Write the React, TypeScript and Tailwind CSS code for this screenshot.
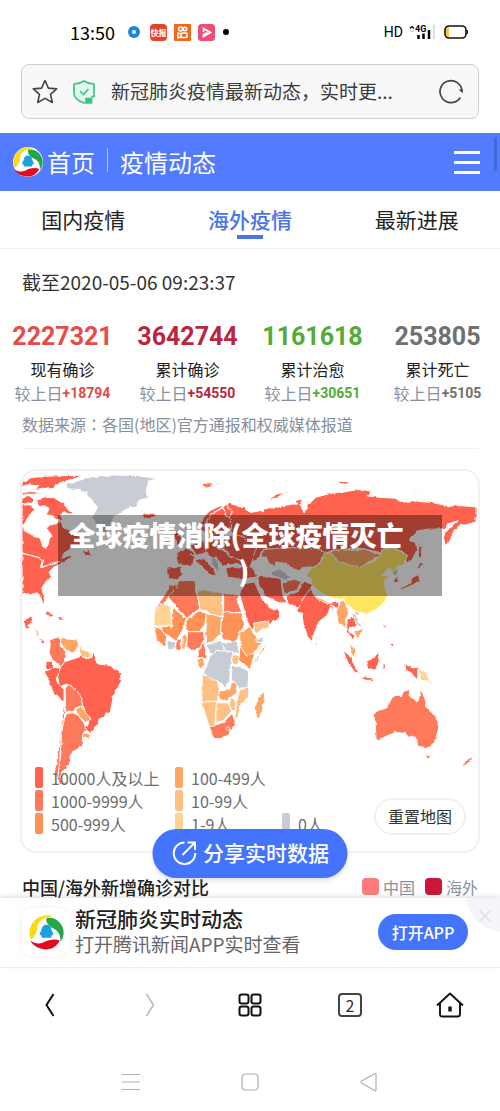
import React from 'react';

const RED = '#ff6350';
const CORAL = '#ff7a5a';
const ORANGE = '#ff9156';
const AMBER = '#ffa665';
const SAND = '#ffc183';
const CREAM = '#ffd394';
const GREY = '#c8ccd5';
const YELLOW = '#ffe662';

interface Region {
  fill: string;
  points: string[];
}

const regions: Region[] = [
  {
    fill: RED,
    points: [
      // russia
      '640,135 662,128 690,138 705,137 720,156 750,150 760,156 765,140 800,142 820,135 850,130 865,130 860,120 876,115 876,135 885,157 895,145 892,125 905,124 920,110 960,98 1010,92 1050,86 1090,95 1075,105 1120,110 1160,112 1180,125 1210,120 1270,125 1320,135 1360,135 1404,138 1404,184 1380,190 1355,195 1340,206 1335,215 1325,240 1312,255 1305,235 1310,215 1335,195 1350,180 1320,190 1305,205 1260,205 1230,210 1200,240 1220,245 1225,270 1210,300 1190,310 1195,285 1160,262 1130,265 1110,275 1060,264 1020,265 970,270 945,280 920,265 870,262 820,262 760,268 750,290 720,310 700,300 680,270 670,235 665,200',
      // north america
      '33,125 60,135 70,150 55,165 45,180 35,195 40,210 62,222 85,230 93,250 104,264 113,250 115,235 124,225 112,210 108,195 130,190 150,182 160,200 180,215 200,222 215,240 205,255 180,265 160,278 150,295 175,285 185,295 160,303 150,312 130,320 115,335 122,350 100,372 92,385 97,400 102,425 98,434 90,415 85,402 60,400 45,402 33,404',
      '33,66 60,50 100,46 150,44 215,43 190,55 165,60 135,70 130,82 110,84 95,82 75,86 80,75 50,72 33,78',
      '33,95 60,92 105,96 70,100 33,100',
      '33,112 60,105 72,118 62,128 33,125',
      '75,120 100,108 130,110 148,122 160,125 168,142 190,158 172,160 160,152 150,165 160,180 140,176 125,165 105,162 115,145 100,135 85,138',
      '215,272 235,268 243,284 225,286',
      '395,160 430,157 440,165 415,174 400,170',
      // europe
      '570,190 585,165 600,150 625,138 650,132 668,150 660,170 666,200 640,225 620,235 600,240 600,225 585,215 570,205',
      '540,255 580,240 620,235 660,225 690,225 720,240 740,260 720,330 690,310 655,310 640,320 620,290 600,290 590,275 560,285',
      '500,275 530,262 555,280 550,310 530,318 505,310',
      '470,320 512,318 515,345 500,358 472,355',
      '552,300 580,292 610,325 620,345 605,345 575,315',
      '490,215 505,215 525,255 505,258 495,235',
      '648,325 700,318 732,325 742,350 700,358 655,350',
      // middle east and south asia
      '745,348 780,350 815,355 820,400 830,430 800,422 770,410 748,375',
      '690,402 705,370 735,365 750,400 765,425 790,450 805,446 813,452 805,480 775,492 735,498 728,515 712,480',
      '830,408 865,395 885,365 910,372 905,395 880,420 870,442 835,430',
      '880,418 903,385 920,412 960,430 990,425 990,445 965,440 955,465 930,485 915,520 908,548 895,530 882,490 878,460 860,455 870,440',
      '1015,478 1035,470 1048,490 1040,502 1022,500 1020,515 1038,530 1030,540 1012,515',
      // far east
      '1158,350 1168,350 1170,365 1160,368',
      '1175,385 1200,370 1220,345 1230,340 1235,365 1210,375 1180,388',
      '1225,320 1240,305 1248,312 1235,324',
      '1232,245 1242,270 1238,295 1230,290',
      '1128,485 1133,500 1126,506',
      '1145,555 1155,550 1148,568',
      '780,120 800,100 860,88 820,100 795,115',
      '985,60 1015,62 1020,70 995,68',
      '1212,94 1245,96 1220,98',
      // indonesia
      '1002,572 1020,585 1050,640 1038,638 1018,610',
      '1070,605 1095,595 1110,575 1112,605 1100,632 1078,625',
      '1053,648 1095,656 1096,662 1070,662',
      '1123,610 1132,615 1124,636',
      '1185,612 1215,625 1228,622 1228,662 1212,645 1190,628',
      // south america
      '150,620 165,605 180,600 210,590 235,595 250,578 262,612 300,618 330,640 333,665 310,705 300,755 265,780 262,800 240,822 225,810 240,780 215,745 215,720 195,695 165,675 145,680 140,645',
      '103,635 125,625 150,620 140,650 140,670 160,690 160,725 130,705 118,675',
      '33,488 60,465 66,480 50,495 60,508 45,505',
      '105,605 125,605 125,625 107,632',
    ],
  },
  {
    fill: CORAL,
    points: [
      '120,540 145,530 150,560 165,575 160,610 150,620 125,600 115,580',
      '163,685 175,675 200,695 215,720 215,740 195,745 190,755 165,760',
      '168,762 195,760 220,790 225,810 215,840 220,860 190,875 178,890 180,910 165,925 150,950 160,972 140,950 150,890 150,830 160,780',
      '158,730 163,760 152,830 147,900 142,950 155,965 175,978 150,975 130,945 138,900 150,830 155,770',
      '465,402 480,375 500,370 508,385 475,412 440,455 430,455',
      '473,410 500,385 505,362 555,360 562,400 570,445 530,475',
      '642,400 690,405 682,420 697,457 642,457',
      '533,515 580,515 585,530 572,560 545,572 530,560',
      '565,575 585,545 588,572 592,595 565,590',
      '498,535 514,540 514,570 498,572',
      '598,802 640,790 668,762 677,790 660,825 635,838 612,838',
      '570,68 600,65 610,72 590,82',
      '615,66 645,64 625,70',
      '760,268 820,262 880,262 925,265 955,277 935,300 915,320 890,320 870,330 850,325 830,310 800,305 795,315 780,310 770,290 755,290',
      '820,370 860,355 880,365 860,390 830,402',
      // australia, tasmania, new zealand
      '1095,765 1105,755 1135,745 1150,715 1165,705 1178,712 1185,695 1205,690 1202,705 1228,730 1237,690 1248,710 1255,740 1275,765 1292,790 1290,815 1275,860 1250,868 1230,860 1220,835 1210,830 1205,838 1190,822 1160,820 1135,830 1115,840 1102,840 1100,800',
      '1250,887 1268,887 1260,902',
      '1397,886 1387,908 1365,922 1363,918 1378,902',
    ],
  },
  {
    fill: ORANGE,
    points: [
      '485,440 530,475 525,490 515,520 495,545 480,530 455,515 455,500 485,500',
      '530,480 570,452 590,460 585,495 570,515 535,515 525,495',
      '637,458 697,458 705,495 690,520 680,545 640,540 632,510',
      '690,550 718,540 735,580 722,630 690,600',
      '748,590 768,545 766,565 745,600 722,618',
      '430,500 450,505 470,530 465,562 440,540',
    ],
  },
  {
    fill: AMBER,
    points: [
      '590,460 635,470 632,520 610,545 590,550 585,520',
      '690,520 720,500 738,530 762,545 740,575 712,590 692,560',
      '516,530 530,520 526,568 516,568',
      '625,695 660,690 665,670 680,665 682,700 650,725 630,720',
      '560,600 580,595 585,615 570,630',
      '735,745 745,715 765,695 765,720 750,775 738,775',
      '145,535 200,540 205,560 185,580 165,570 150,550',
      '195,750 212,740 240,780 225,790 200,765',
      '218,820 240,825 235,840 215,835',
      '982,455 995,425 1010,425 1015,445 1020,460 1010,480 1015,510 1005,500 990,490',
      '965,275 1000,265 1030,270 1065,265 1100,278 1120,285 1090,300 1050,322 990,305 975,290',
      '1035,514 1062,505 1060,522 1045,535',
      '1022,543 1038,570 1037,594 1026,580',
      '918,545 926,550 922,564',
      '920,410 960,425 960,430 925,420',
    ],
  },
  {
    fill: SAND,
    points: [
      '562,400 570,385 600,392 638,398 640,470 615,465 570,445',
      '578,645 620,655 630,690 625,725 575,725',
      '690,690 718,685 716,715 690,740 686,775 675,775 680,735',
      '575,727 640,725 620,730 615,800 598,802',
      '620,730 655,730 665,755 640,785 618,790',
      '655,730 665,715 680,725 680,750 668,755',
      '667,585 690,585 688,612 665,612',
      '205,555 220,570 245,578 235,595 210,590',
      '732,490 778,482 780,500 740,520',
      '70,505 85,520 82,532 74,522',
      '1035,452 1055,455 1048,468',
    ],
  },
  {
    fill: CREAM,
    points: ['432,455 455,428 482,440 485,500 432,495', '1232,628 1255,638 1258,652 1272,674 1255,664 1235,662'],
  },
  {
    fill: GREY,
    points: [
      '165,72 200,60 240,48 300,42 380,44 440,52 415,62 408,90 412,110 385,120 380,135 340,150 315,165 300,190 285,222 270,215 255,190 245,165 262,140 240,115 225,95 195,85 170,84',
      '590,555 635,542 640,560 680,570 690,580 630,592 600,580',
      '637,552 682,542 690,582 650,575',
      '600,590 620,572 670,575 665,605 660,660 650,685 625,665 600,655 580,640 590,620',
      '665,620 690,620 718,635 715,685 690,685 665,660',
      '470,545 496,545 496,568 475,570',
      '735,540 762,530 760,548 745,548',
      '785,335 810,325 845,350 830,360 790,345',
      '602,292 625,295 628,335 612,322',
      '1150,330 1170,325 1165,345 1155,345',
      '963,435 976,438 972,458',
      '1028,462 1040,460 1048,482 1058,500 1050,500 1038,482',
      '236,578 246,580 240,594',
    ],
  },
  {
    fill: YELLOW,
    points: [
      '890,345 910,325 935,305 945,280 965,278 985,302 1050,322 1100,300 1115,285 1120,268 1150,262 1198,285 1185,310 1165,320 1150,335 1140,325 1120,345 1140,345 1125,365 1135,400 1130,425 1100,450 1070,460 1045,455 1030,448 1010,430 1005,415 980,415 945,405 910,375 905,355',
      '1068,472 1078,474 1070,480',
    ],
  },
];

const borders = [
  '33,278 80,290 98,300 92,322 120,310 150,303',
  '570,205 590,190 605,160 640,140',
  '640,140 648,165 660,170',
  '655,232 640,260 660,290 700,300',
  '585,242 588,275',
  '620,238 622,262 655,275',
  '540,285 560,285 590,290',
  '500,316 550,316',
];

const WorldMap: React.FC = () => (
  <svg viewBox="33 30 1377 1146" className="block w-full" role="img" aria-label="海外疫情地图">
    <defs>
      <filter id="coast" x="0" y="0" width="1" height="1">
        <feTurbulence type="fractalNoise" baseFrequency="0.06" numOctaves="2" seed="4" />
        <feDisplacementMap in="SourceGraphic" scale="10" xChannelSelector="R" yChannelSelector="G" />
      </filter>
    </defs>
    <g filter="url(#coast)" stroke="#fff" strokeWidth="3" strokeLinejoin="round">
      {regions.map((region) => (
        <g key={region.fill} fill={region.fill}>
          {region.points.map((p) => (
            <polygon key={p} points={p} />
          ))}
        </g>
      ))}
      <g fill="none" strokeWidth="4">
        {borders.map((b) => (
          <polyline key={b} points={b} />
        ))}
      </g>
      <g fill={RED} stroke="none">
        <polygon points="100,455 118,460 132,470 120,470" />
        <polygon points="140,470 156,478 146,480" />
        <polygon points="80,535 100,548 96,552" />
      </g>
      <circle cx="656" cy="808" r="6" fill={CORAL} />
    </g>
  </svg>
);

const Logo: React.FC<{ className?: string }> = ({ className }) => (
  <svg viewBox="0 0 100 100" className={className} aria-hidden="true">
    <circle cx="50" cy="50" r="50" fill="#fff" />
    <path d="M4 70C-6 36 14 4 50 1c8 0 13 1 17 4C42 6 26 16 24 34c-1 16-8 29-20 36z" fill="#fbd913" />
    <path d="M50 9c26-6 50 17 49 43-1 10-4 18-9 24 0-22-6-30-19-37C56 32 47 20 50 9z" fill="#22a846" />
    <path d="M4 73c12 10 26 11 38 5 16-8 32-10 46-5C78 92 60 101 43 98 24 95 10 86 4 73z" fill="#e10a20" />
    <path d="M50 28c-9 0-14 7-14 15-5 7-6 11-5 15 1 1 3 0 4-2 0 4 2 5 1 9h28c-1-4 1-5 1-9 1 2 3 3 4 2 1-4 0-8-5-15 0-8-5-15-14-15z" fill="#1c9fe0" />
  </svg>
);

const StatusBar: React.FC = () => (
  <div className="flex h-16 items-center justify-between pl-[70px] pr-8 text-black">
    <div className="flex items-center">
      <span className="w-[58px] text-lg">13:50</span>
      <svg viewBox="0 0 12 12" className="size-3" aria-hidden="true">
        <circle cx="6" cy="6" r="6" fill="#1d84dc" />
        <circle cx="6" cy="6" r="2" fill="#fff" />
      </svg>
      <span className="ml-2.5 flex size-[17px] flex-col items-center justify-center rounded-sm bg-[#e0442f] text-[8px] leading-[9px] font-bold text-white">
        快报
      </span>
      <svg viewBox="0 0 17 17" className="ml-[7px] size-[17px]" aria-hidden="true">
        <rect width="17" height="17" rx="1" fill="#f1671c" />
        <g fill="none" stroke="#fff" strokeWidth="1.6">
          <circle cx="6.5" cy="5" r="2" />
          <circle cx="11" cy="5" r="1.7" />
          <rect x="7" y="9" width="6" height="4.5" rx="1" />
          <path d="M7 10 4 9v5l3-1" />
        </g>
      </svg>
      <svg viewBox="0 0 17 17" className="ml-[7px] size-[17px]" aria-hidden="true">
        <rect width="17" height="17" rx="3.5" fill="#ee4d78" />
        <path d="M5.5 8V4.500L12.500 8.500 5.500 12.500v-2l4-2" fill="none" stroke="#fff" strokeWidth="1.7" />
      </svg>
      <span className="ml-2 size-1.5 rounded-full bg-black" />
    </div>
    <div className="flex items-center">
      <span className="text-sm font-['Roboto','Noto_Sans_CJK_SC',sans-serif]">HD</span>
      <svg viewBox="0 0 27 16" className="ml-1.5 h-4 w-[27px]" aria-hidden="true">
        <path d="M1 4.500 3 2.500l2 2" fill="none" stroke="#111" strokeWidth="1.4" />
        <path d="M1 6l2 2 2-2" fill="none" stroke="#ccc" strokeWidth="1.2" />
        <text x="6" y="8" fontSize="9" fontWeight="700" fontFamily="Roboto, sans-serif">4G</text>
        <path d="M9.500 11v4M14.500 9.500V15M20 6v9" stroke="#000" strokeWidth="2.5" />
        <path d="M25 1v14" stroke="#ddd" strokeWidth="2" />
      </svg>
      <svg viewBox="0 0 24 14" className="ml-2 h-3.5 w-6" aria-hidden="true">
        <path d="M2 2h3v10H2z" fill="#f6c945" />
        <rect x="1" y="1" width="21" height="12" rx="4" fill="none" stroke="#111" strokeWidth="1.6" />
        <path d="M23.300 5v4" stroke="#111" strokeWidth="1.2" />
      </svg>
    </div>
  </div>
);

const AddressBar: React.FC = () => (
  <div className="mx-[21px] flex h-[55px] items-center rounded-lg border border-[#cfcfcf] bg-[#f8f8f8] pl-2.5 pr-3.5 text-[#3c3c3c]">
    <button type="button" aria-label="收藏">
      <svg viewBox="0 0 26 26" className="size-[26px]" fill="none" stroke="#444" strokeWidth="1.6" strokeLinejoin="round">
        <path d="M13 1.500l3.400 7.600 8.300.800-6.200 5.500 1.800 8.100L13 19.400l-7.300 4.100 1.800-8.100L1.300 9.900l8.300-.800z" />
      </svg>
    </button>
    <svg viewBox="0 0 24 26" className="ml-3.5 h-[26px] w-6" fill="none" stroke="#3fc486" strokeWidth="1.7" aria-hidden="true">
      <path d="M22 17V5c-4 0-7-1-10-3-3 2-6 3-10 3v9c0 5 4 8 10 10h1" fill="#e4faee" />
      <path d="M8 12l3.500 3.500L16.500 10" />
      <path d="M14 19.500h5.500V24H14z" fill="#3fc486" />
      <path d="M20 19c0-2 2-2 2.500-1" />
    </svg>
    <span className="ml-[15px] min-w-0 flex-1 truncate text-[19px]">新冠肺炎疫情最新动态，实时更...</span>
    <button type="button" aria-label="刷新">
      <svg viewBox="0 0 26 26" className="size-[26px]" fill="none" stroke="#444" strokeWidth="1.7">
        <path d="M22.300 18.500A11 11 0 1 1 24 12.500" />
        <path d="M20.500 10.500h4.200v3.800z" fill="#444" stroke="none" />
      </svg>
    </button>
  </div>
);

const SiteHeader: React.FC = () => (
  <header className="relative mt-3.5 flex h-[58px] items-center bg-[#527bff] pl-[13px] pr-5 text-2xl text-white">
    <Logo className="size-[30px]" />
    <a href="#home" className="ml-1">首页</a>
    <span className="mx-3 mb-1 h-6 w-px bg-white/50" />
    <a href="#news" className="flex-1">疫情动态</a>
    <button type="button" aria-label="菜单" className="flex w-[26px] flex-col gap-[7px]">
      <span className="h-[3px] bg-white" />
      <span className="h-[3px] bg-white" />
      <span className="h-[3px] bg-white" />
    </button>
    <span className="absolute right-[3px] top-1 h-[34px] w-[3px] rounded bg-[#4167d8]" />
  </header>
);

const tabs = ['国内疫情', '海外疫情', '最新进展'];

const Tabs: React.FC = () => (
  <nav className="grid h-[58px] grid-cols-3 border-b border-[#f0f0f0] text-[21px]">
    {tabs.map((tab, i) => (
      <a
        key={tab}
        href={`#tab-${i}`}
        className={
          i === 1
            ? 'flex flex-col items-center pt-[13px] leading-[31px] font-medium text-[#4a74ea]'
            : 'flex flex-col items-center pt-[13px] leading-[31px] text-[#222]'
        }
      >
        {tab}
        {i === 1 && <span className="h-1 w-[26px] bg-[#4a74ea]" />}
      </a>
    ))}
  </nav>
);

const stats = [
  { value: '2227321', label: '现有确诊', delta: '+18794', color: 'text-[#e44c48]' },
  { value: '3642744', label: '累计确诊', delta: '+54550', color: 'text-[#b82642]' },
  { value: '1161618', label: '累计治愈', delta: '+30651', color: 'text-[#53ab36]' },
  { value: '253805', label: '累计死亡', delta: '+5105', color: 'text-[#707070]' },
];

const Stats: React.FC = () => (
  <section>
    <p className="px-[22px] pt-[19px] text-[19px] leading-7 text-[#333]">截至2020-05-06 09:23:37</p>
    <div className="mt-[23px] grid grid-cols-4 text-center">
      {stats.map((s) => (
        <div key={s.label}>
          <p className={`font-['Roboto',sans-serif] text-[25px] leading-9 font-bold ${s.color}`}>{s.value}</p>
          <p className="mt-0.5 text-base leading-6 text-[#222]">{s.label}</p>
          <p className="flex items-center justify-center text-base leading-6 text-[#87909d]">
            较上日
            <span className={`font-['Roboto',sans-serif] text-sm font-bold ${s.color}`}>{s.delta}</span>
          </p>
        </div>
      ))}
    </div>
    <p className="mx-[22px] mt-[7px] border-b border-[#f2f2f2] pb-3 text-base leading-6 text-[#87909d]">
      数据来源<span className="font-['Noto_Sans_CJK_TC',sans-serif] leading-none" lang="zh-TW">：</span>各国(地区)官方通报和权威媒体报道
    </p>
  </section>
);

const legend = [
  { label: '10000人及以上', color: 'bg-[#ff6350]' },
  { label: '100-499人', color: 'bg-[#ffa665]' },
  { label: '', color: '' },
  { label: '1000-9999人', color: 'bg-[#ff7a5a]' },
  { label: '10-99人', color: 'bg-[#ffc183]' },
  { label: '', color: '' },
  { label: '500-999人', color: 'bg-[#ff9156]' },
  { label: '1-9人', color: 'bg-[#ffd394]' },
  { label: '0人', color: 'bg-[#c8ccd5]' },
];

const MapCard: React.FC = () => (
  <section className="relative mx-5 mt-5 overflow-hidden rounded-2xl border-2 border-[#f1f1f1]">
    <WorldMap />
    <div className="absolute left-9 right-9 top-11 bg-black/37 pt-0.5 pb-[7px] pr-7 text-center text-[27px] leading-9 font-black text-white">
      全球疫情消除(全球疫情灭亡
      <span className="block pl-4">)</span>
    </div>
    <ul className="absolute bottom-4 left-[13px] grid grid-cols-[140px_107px_60px] gap-y-px text-base leading-[22px] text-[#6d6d6d]">
      {legend.map((item, i) => (
        <li key={i} className="flex items-center">
          {item.label && <span className={`mr-2 h-[21px] w-2 rounded-xs ${item.color}`} />}
          {item.label}
        </li>
      ))}
    </ul>
    <button
      type="button"
      className="absolute bottom-4 right-3 h-[37px] rounded-full border-2 border-[#f0f0f0] bg-white px-3 text-base leading-none text-[#333]"
    >
      重置地图
    </button>
  </section>
);

const Compare: React.FC = () => (
  <section className="relative flex h-[45px] items-end justify-between px-[22px]">
    <h2 className="text-lg leading-[22px] font-medium text-[#222]">中国/海外新增确诊对比</h2>
    <div className="flex items-center text-base leading-[22px] text-[#87909d]">
      <span className="mr-1 size-[17px] rounded-sm bg-[#fe7b79]" />
      中国
      <span className="ml-2.5 mr-1 size-[17px] rounded-sm bg-[#cb1838]" />
      海外
    </div>
    <button
      type="button"
      className="absolute -top-6 left-1/2 flex h-[49px] w-[195px] -translate-x-1/2 items-center justify-center gap-1.5 rounded-full bg-[#4474fb] text-[21px] font-medium whitespace-nowrap text-white shadow-md"
    >
      <svg viewBox="0 0 26 26" className="size-[26px]" fill="none" stroke="#fff" strokeWidth="1.9">
        <path d="M13 2.500A10.800 10.800 0 1 0 23.800 13" />
        <path d="M11 15 23.500 2.500M16 2.500h7.500V10" />
      </svg>
      分享实时数据
    </button>
  </section>
);

const AppBanner: React.FC = () => (
  <aside className="relative flex h-[70px] items-center overflow-hidden border-b border-[#ededed] bg-white pl-[22px] pr-8 shadow-[0_-2px_4px_rgba(90,100,140,0.18)]">
    <span className="flex size-12 items-center justify-center rounded-xl shadow-[0_0_6px_rgba(80,110,220,0.12)]">
      <Logo className="size-[35px]" />
    </span>
    <div className="ml-[5px] flex-1 whitespace-nowrap">
      <p className="text-[21px] leading-6 font-medium text-[#222]">新冠肺炎实时动态</p>
      <p className="text-[19px] leading-7 text-[#666]">打开腾讯新闻APP实时查看</p>
    </div>
    <a href="#app" className="flex h-9 w-[90px] items-center justify-center rounded-full bg-[#4474fb] text-base font-medium text-white">
      打开APP
    </a>
    <button type="button" aria-label="关闭" className="absolute -right-1 -top-1 flex size-[38px] items-center justify-center rounded-bl-full bg-[#f4f5fb]">
      <svg viewBox="0 0 12 12" className="mt-1.5 size-3" stroke="#dcdde3" strokeWidth="1.2">
        <path d="M0 0l12 12M12 0L0 12" />
      </svg>
    </button>
  </aside>
);

const BrowserNav: React.FC = () => (
  <nav className="grid h-[74px] grid-cols-5 place-items-center">
    <button type="button" aria-label="后退">
      <svg viewBox="0 0 10 24" className="h-6 w-2.5" fill="none" stroke="#111" strokeWidth="2">
        <path d="M8.500 1 1.500 12l7 11" />
      </svg>
    </button>
    <button type="button" aria-label="前进">
      <svg viewBox="0 0 10 24" className="h-6 w-2.5" fill="none" stroke="#bbb" strokeWidth="1.6">
        <path d="M1.500 1l7 11-7 11" />
      </svg>
    </button>
    <button type="button" aria-label="菜单">
      <svg viewBox="0 0 24 24" className="size-6" fill="none" stroke="#111" strokeWidth="2">
        <rect x="1.5" y="1.5" width="9" height="9" rx="2.2" />
        <rect x="13.5" y="1.5" width="9" height="9" rx="2.2" />
        <rect x="1.5" y="13.5" width="9" height="9" rx="2.2" />
        <rect x="13.5" y="13.5" width="9" height="9" rx="2.2" />
      </svg>
    </button>
    <button type="button" className="flex size-6 items-center justify-center rounded border-2 border-[#444] text-base leading-none text-[#333]">
      2
    </button>
    <button type="button" aria-label="主页">
      <svg viewBox="0 0 28 26" className="h-[26px] w-7" fill="none" stroke="#111" strokeWidth="1.9" strokeLinejoin="round">
        <path d="M1 13.500 14 1.500l13 12M4 11v11.500A2.200 2.200 0 0 0 6.200 24.500h15.600a2.200 2.200 0 0 0 2.200-2V11" />
        <path d="M12.300 14.500h3.400v5h-3.400z" fill="#111" stroke="none" />
      </svg>
    </button>
  </nav>
);

const SystemNav: React.FC = () => (
  <nav className="flex h-20 items-center justify-center gap-[101px]">
    <button type="button" aria-label="最近任务">
      <svg viewBox="0 0 18 18" className="size-[18px]" stroke="#b0b0b0" strokeWidth="1.2">
        <path d="M0 1.500h18M0 9h18M0 16.500h18" />
      </svg>
    </button>
    <button type="button" aria-label="桌面">
      <svg viewBox="0 0 18 18" className="size-[18px]" fill="none" stroke="#b0b0b0" strokeWidth="1.2">
        <rect x="1" y="1" width="16" height="16" rx="3.5" />
      </svg>
    </button>
    <button type="button" aria-label="返回">
      <svg viewBox="0 0 18 20" className="h-5 w-[18px]" fill="none" stroke="#b0b0b0" strokeWidth="1.2" strokeLinejoin="round">
        <path d="M16 1.800v16.400q0 1-1 .500L1.500 11q-1-1 0-2L15 1.500q1-.500 1 .300z" />
      </svg>
    </button>
  </nav>
);

export default function App() {
  return (
    <div className="min-h-screen w-full bg-white font-['Noto_Sans_CJK_SC',sans-serif]">
      <StatusBar />
      <AddressBar />
      <SiteHeader />
      <Tabs />
      <main>
        <Stats />
        <MapCard />
        <Compare />
      </main>
      <AppBanner />
      <BrowserNav />
      <SystemNav />
    </div>
  );
}
